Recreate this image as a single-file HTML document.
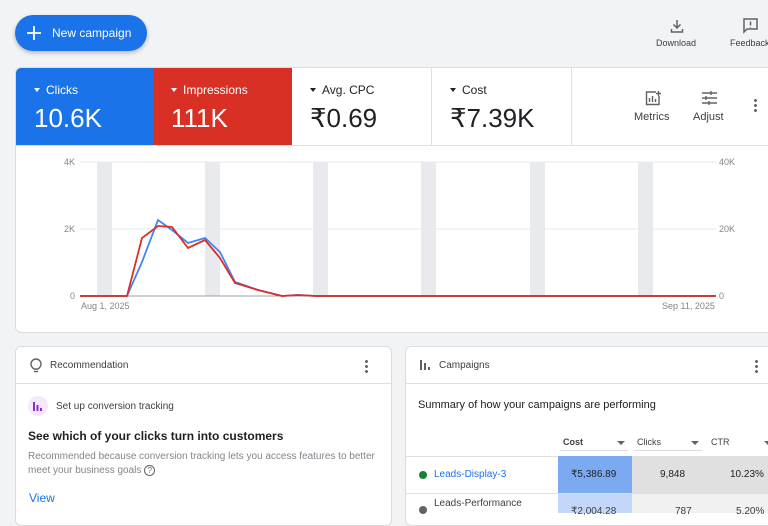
<!DOCTYPE html>
<html><head><style>
*{margin:0;padding:0;box-sizing:border-box}
body{width:768px;height:512px;overflow:hidden;background:#f1f3f4;font-family:"Liberation Sans",Arial,sans-serif;position:relative;color:#202124}
.abs{position:absolute}
.btn{left:15px;top:15px;width:132px;height:36px;border-radius:18px;background:#1a73e8;color:#fff;font-size:12px;box-shadow:0 2px 4px rgba(0,0,0,.25)}
.card{background:#fff;border:1px solid #dadce0;border-radius:6px}
.tile{top:68px;height:78px;padding:15px 0 0 18px}
.tile .l{font-size:12px}
.tile .v{font-size:26px;margin-top:6px}
.ax{font-size:9px;color:#80868b}
.tri{display:inline-block;width:0;height:0;border-left:3.5px solid transparent;border-right:3.5px solid transparent;border-top:4px solid currentColor;vertical-align:middle;margin-right:6px;position:relative;top:-1px}
.tri2{position:absolute;width:0;height:0;border-left:4px solid transparent;border-right:4px solid transparent;border-top:4px solid #5f6368}
</style></head><body>
<div class="abs btn"><svg class="abs" style="left:12px;top:11px" width="14" height="14" viewBox="0 0 14 14" stroke="#fff" stroke-width="1.8"><path d="M7 0v14M0 7h14"/></svg><span class="abs" style="left:37px;top:11px">New campaign</span></div>
<svg class="abs" style="left:669px;top:18px" width="16" height="16" viewBox="0 0 16 16" fill="none" stroke="#5f6368" stroke-width="1.5"><path d="M8 2v8M4.5 6.5 8 10l3.5-3.5M2.5 11v3h11v-3"/></svg>
<div class="abs" style="left:656px;top:38px;font-size:9px;color:#3c4043">Download</div>
<svg class="abs" style="left:742px;top:17px" width="17" height="17" viewBox="0 0 17 17" fill="none" stroke="#5f6368" stroke-width="1.5"><path d="M2 2h13v10H5l-3 3z"/><path d="M8.5 4.5v4M8.5 10v.5"/></svg>
<div class="abs" style="left:730px;top:38px;font-size:9px;color:#3c4043">Feedback</div>

<div class="abs card" style="left:15px;top:67px;width:770px;height:266px"></div>
<div class="abs tile" style="left:16px;width:137px;background:#1a73e8;color:#fff;border-top-left-radius:5px"><div class="l"><span class="tri"></span>Clicks</div><div class="v">10.6K</div></div>
<div class="abs tile" style="left:153px;width:139px;background:#d93025;color:#fff"><div class="l"><span class="tri"></span>Impressions</div><div class="v">111K</div></div>
<div class="abs tile" style="left:292px;width:140px;border-right:1px solid #e0e0e0;border-bottom:1px solid #e0e0e0"><div class="l"><span class="tri"></span>Avg. CPC</div><div class="v">₹0.69</div></div>
<div class="abs tile" style="left:432px;width:140px;border-right:1px solid #e0e0e0;border-bottom:1px solid #e0e0e0"><div class="l"><span class="tri"></span>Cost</div><div class="v">₹7.39K</div></div>
<div class="abs" style="left:572px;top:145px;width:200px;height:1px;background:#e0e0e0"></div>
<div class="abs" style="left:16px;top:145px;width:276px;height:1px;background:#e0e0e0"></div>
<svg class="abs" style="left:645px;top:90px" width="17" height="16" viewBox="0 0 17 16" fill="none" stroke="#5f6368" stroke-width="1.4"><path d="M11 2H1.5v12.5H14V6"/><path d="M4.5 12V8M7.5 12V6M10.5 12V9M13.5 1v5M11 3.5h5"/></svg>
<div class="abs" style="left:634px;top:111px;font-size:11px;color:#3c4043">Metrics</div>
<svg class="abs" style="left:701px;top:90px" width="17" height="16" viewBox="0 0 17 16" fill="none" stroke="#5f6368" stroke-width="1.4"><path d="M1 3h15M1 8h15M1 13h15M10 1v4M5 6v4M8 11v4"/></svg>
<div class="abs" style="left:693px;top:111px;font-size:11px;color:#3c4043">Adjust</div>
<div class="abs" style="left:754px;top:98px;width:3px;height:14px;background:radial-gradient(circle,#5f6368 1.3px,transparent 1.6px) 0 0/3px 5px"></div>

<svg class="abs" style="left:0;top:150px" width="768" height="170">
<g fill="#e8eaed"><rect x="97" y="12" width="15" height="134"/><rect x="205" y="12" width="15" height="134"/><rect x="313" y="12" width="15" height="134"/><rect x="421" y="12" width="15" height="134"/><rect x="530" y="12" width="15" height="134"/><rect x="638" y="12" width="15" height="134"/></g>
<g stroke="#e8eaed"><line x1="80" y1="12" x2="716" y2="12"/><line x1="80" y1="79" x2="716" y2="79"/></g>
<line x1="80" y1="146" x2="716" y2="146" stroke="#9aa0a6"/>
<polyline fill="none" stroke="#4285f4" stroke-width="1.8" points="80,146 127,146 142,112 158,70 172,80 188,93 205,88 220,102 235,132 258,140 282,146 298,145 316,146 716,146"/>
<polyline fill="none" stroke="#d93025" stroke-width="1.8" points="80,146 127,146 142,88 158,76 172,77 188,98 205,90 220,108 235,133 258,140 282,146 298,145 316,146 716,146"/>
</svg>
<div class="abs ax" style="left:64px;top:157px">4K</div>
<div class="abs ax" style="left:64px;top:224px">2K</div>
<div class="abs ax" style="left:70px;top:291px">0</div>
<div class="abs ax" style="left:719px;top:157px">40K</div>
<div class="abs ax" style="left:719px;top:224px">20K</div>
<div class="abs ax" style="left:719px;top:291px">0</div>
<div class="abs ax" style="left:81px;top:301px">Aug 1, 2025</div>
<div class="abs ax" style="left:662px;top:301px">Sep 11, 2025</div>

<div class="abs card" style="left:15px;top:346px;width:377px;height:180px"></div>
<div class="abs" style="left:16px;top:383px;width:375px;height:1px;background:#e0e0e0"></div>
<svg class="abs" style="left:30px;top:358px" width="12" height="16" viewBox="0 0 12 16" fill="none" stroke="#5f6368" stroke-width="1.4"><path d="M4 11C2 9.5 1 8 1 6a5 5 0 0 1 10 0c0 2-1 3.5-3 5zM4 13.5h4"/></svg>
<div class="abs" style="left:50px;top:360px;font-size:10px;color:#3c4043">Recommendation</div>
<div class="abs" style="left:365px;top:359px;width:3px;height:14px;background:radial-gradient(circle,#5f6368 1.3px,transparent 1.6px) 0 0/3px 5px"></div>
<div class="abs" style="left:28px;top:396px;width:20px;height:20px;border-radius:50%;background:#f3e8fd"></div>
<svg class="abs" style="left:33px;top:401px" width="10" height="10" viewBox="0 0 10 10" fill="#8430ce"><rect x="0" y="1" width="2" height="9"/><rect x="3.5" y="4" width="2" height="6"/><rect x="7" y="7" width="2" height="3"/></svg>
<div class="abs" style="left:56px;top:401px;font-size:10px;color:#3c4043">Set up conversion tracking</div>
<div class="abs" style="left:28px;top:429px;font-size:12px;font-weight:bold;color:#202124">See which of your clicks turn into customers</div>
<div class="abs" style="left:28px;top:450px;width:350px;font-size:10px;line-height:14px;color:#80868b">Recommended because conversion tracking lets you access features to better meet your business goals <span style="display:inline-block;width:11px;height:11px;border:1px solid #5f6368;border-radius:50%;font-size:8px;text-align:center;line-height:9px;color:#5f6368">?</span></div>
<div class="abs" style="left:29px;top:491px;font-size:12px;color:#1a73e8">View</div>

<div class="abs card" style="left:405px;top:346px;width:380px;height:180px"></div>
<div class="abs" style="left:406px;top:383px;width:370px;height:1px;background:#e0e0e0"></div>
<svg class="abs" style="left:420px;top:360px" width="11" height="10" viewBox="0 0 11 10" fill="#5f6368"><rect x="0" y="0" width="2" height="10"/><rect x="4" y="3" width="2" height="7"/><rect x="8" y="7" width="2" height="3"/></svg>
<div class="abs" style="left:439px;top:360px;font-size:10px;color:#3c4043">Campaigns</div>
<div class="abs" style="left:755px;top:359px;width:3px;height:14px;background:radial-gradient(circle,#5f6368 1.3px,transparent 1.6px) 0 0/3px 5px"></div>
<div class="abs" style="left:418px;top:399px;font-size:11px;color:#202124">Summary of how your campaigns are performing</div>
<div class="abs" style="left:563px;top:437px;font-size:9px;font-weight:bold;color:#3c4043">Cost</div>
<div class="tri2" style="left:617px;top:441px"></div>
<div class="abs" style="left:560px;top:450px;width:68px;height:1px;background:#dadce0"></div>
<div class="abs" style="left:637px;top:437px;font-size:9px;color:#3c4043">Clicks</div>
<div class="tri2" style="left:691px;top:441px"></div>
<div class="abs" style="left:634px;top:450px;width:68px;height:1px;background:#dadce0"></div>
<div class="abs" style="left:711px;top:437px;font-size:9px;color:#3c4043">CTR</div>
<div class="tri2" style="left:764px;top:441px"></div>
<div class="abs" style="left:406px;top:456px;width:370px;height:1px;background:#e0e0e0"></div>
<div class="abs" style="left:558px;top:456px;width:74px;height:37px;background:#7baaf0"></div>
<div class="abs" style="left:632px;top:456px;width:140px;height:37px;background:#e0e0e0"></div>
<div class="abs" style="left:558px;top:493px;width:74px;height:20px;background:#c3d8f8"></div>
<div class="abs" style="left:632px;top:493px;width:140px;height:20px;background:#f1f1f1"></div>
<div class="abs" style="left:406px;top:493px;width:370px;height:1px;background:#e0e0e0"></div>
<div class="abs" style="left:419px;top:471px;width:8px;height:8px;border-radius:50%;background:#188038"></div>
<div class="abs" style="left:434px;top:469px;font-size:10px;color:#1a73e8">Leads-Display-3</div>
<div class="abs" style="left:571px;top:469px;font-size:10px;color:#202124">₹5,386.89</div>
<div class="abs" style="left:660px;top:469px;font-size:10px;color:#202124">9,848</div>
<div class="abs" style="left:730px;top:469px;font-size:10px;color:#202124">10.23%</div>
<div class="abs" style="left:419px;top:506px;width:8px;height:8px;border-radius:50%;background:#5f6368"></div>
<div class="abs" style="left:434px;top:498px;font-size:10px;color:#3c4043">Leads-Performance</div>
<div class="abs" style="left:571px;top:506px;font-size:10px;color:#3c4043">₹2,004.28</div>
<div class="abs" style="left:675px;top:506px;font-size:10px;color:#3c4043">787</div>
<div class="abs" style="left:736px;top:506px;font-size:10px;color:#3c4043">5.20%</div>
</body></html>
